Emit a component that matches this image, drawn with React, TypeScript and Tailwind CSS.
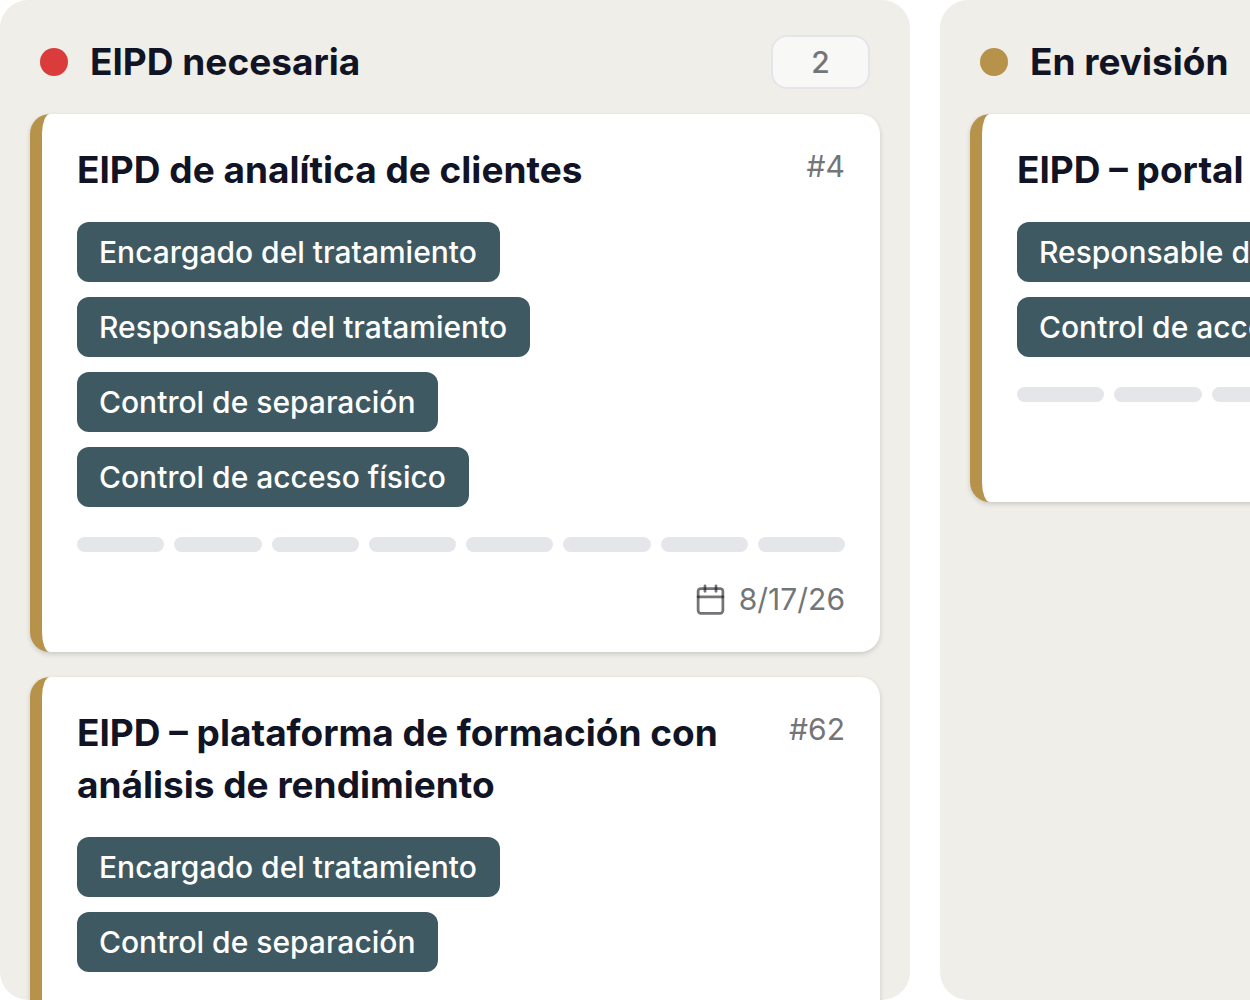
import { Calendar } from "lucide-react";

type Task = {
  id: number;
  title: string;
  tags: string[];
  due?: string;
};

type BoardColumn = {
  name: string;
  dot: string;
  tasks: Task[];
};

const columns: BoardColumn[] = [
  {
    name: "EIPD necesaria",
    dot: "bg-[#da3b3b]",
    tasks: [
      {
        id: 4,
        title: "EIPD de analítica de clientes",
        tags: [
          "Encargado del tratamiento",
          "Responsable del tratamiento",
          "Control de separación",
          "Control de acceso físico",
        ],
        due: "8/17/26",
      },
      {
        id: 62,
        title: "EIPD – plataforma de formación con análisis de rendimiento",
        tags: ["Encargado del tratamiento", "Control de separación"],
      },
    ],
  },
  {
    name: "En revisión",
    dot: "bg-[#b6924a]",
    tasks: [
      {
        id: 5,
        title: "EIPD – portal",
        tags: ["Responsable del tratamiento", "Control de acceso físico"],
      },
    ],
  },
];

const STEPS = 8;

function TaskCard({ task }: { task: Task }) {
  return (
    <article className="rounded-[20px] border-l-12 border-[#b6924a] bg-white px-[35px] py-[30px] shadow-[0_2px_5px_rgba(0,0,0,0.16)]">
      <div className="flex items-start justify-between gap-10">
        <h3 className="text-[37px] leading-[52px] font-bold text-[#111424]">
          {task.title}
        </h3>
        <span className="text-[30px] leading-[45px] text-[#737578]">#{task.id}</span>
      </div>

      <ul className="mt-[26px] flex flex-col items-start gap-[15px]">
        {task.tags.map((tag) => (
          <li
            key={tag}
            className="rounded-xl bg-[#3f5962] pr-[23px] pl-[22px] text-[30px] leading-[60px] font-medium whitespace-nowrap text-white"
          >
            {tag}
          </li>
        ))}
      </ul>

      <div className="mt-[30px] flex gap-[10px]">
        {Array.from({ length: STEPS }, (_, i) => (
          <div key={i} className="h-[15px] flex-1 rounded-full bg-[#e5e6e9]" />
        ))}
      </div>

      <div className="mt-[25px] flex h-[45px] items-center justify-end gap-3 text-[30px] text-[#737578]">
        {task.due && (
          <>
            <Calendar size={33} className="text-[#14181c]/60" aria-hidden="true" />
            <time>{task.due}</time>
          </>
        )}
      </div>
    </article>
  );
}

function Column({ column }: { column: BoardColumn }) {
  return (
    <section className="w-[910px] shrink-0 overflow-hidden rounded-[28px] bg-[#efeee8] px-[30px] pt-[35px]">
      <header className="mb-[25px] flex h-[54px] items-center px-[10px]">
        <span className={`size-7 rounded-full ${column.dot}`} />
        <h2 className="ml-[22px] flex-1 text-[37px] leading-[52px] font-bold text-[#111424]">
          {column.name}
        </h2>
        <span className="flex h-[54px] w-[99px] items-center justify-center rounded-[16px] border-2 border-[#e5e5e9] bg-[#f8f8f7] text-[30px] font-medium text-[#737578]">
          {column.tasks.length}
        </span>
      </header>
      <div className="flex flex-col gap-[25px]">
        {column.tasks.map((task) => (
          <TaskCard key={task.id} task={task} />
        ))}
      </div>
    </section>
  );
}

export default function App() {
  return (
    <main className="flex h-screen gap-[30px] overflow-hidden bg-white font-['Inter',sans-serif]">
      {columns.map((column) => (
        <Column key={column.name} column={column} />
      ))}
    </main>
  );
}
